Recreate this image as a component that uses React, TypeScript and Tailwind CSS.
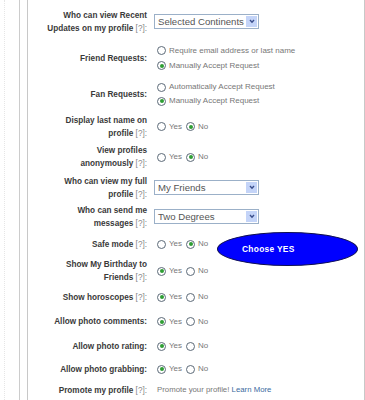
import React from "react";

const Radio = ({ checked }: { checked?: boolean }) => (
  <span className="inline-flex h-[9px] w-[9px] shrink-0 items-center justify-center rounded-full border border-[#5c6a78] bg-white">
    {checked && <span className="h-[4px] w-[4px] rounded-full bg-[#2f9e34]" />}
  </span>
);

const Option = ({ checked, text }: { checked?: boolean; text: string }) => (
  <span className="flex items-center gap-[3px]">
    <Radio checked={checked} />
    <span className="text-[8px] leading-[10px] text-[#777]">{text}</span>
  </span>
);

const YesNo = ({ yes }: { yes?: boolean }) => (
  <div className="ml-[3px] flex items-center gap-[4px]">
    <Option checked={yes} text="Yes" />
    <Option checked={!yes} text="No" />
  </div>
);

const Select = ({ value }: { value: string }) => (
  <div className="flex h-[15px] w-[105px] items-center border border-[#9bb0c8] bg-white">
    <span className="flex-1 pl-[3px] text-[9.6px] leading-[12px] text-[#555]">{value}</span>
    <span className="mr-[1px] flex h-[11px] w-[11px] items-center justify-center bg-[#c4d4f8]">
      <svg width="6" height="5" viewBox="0 0 6 5">
        <path d="M1 1 L3 3.2 L5 1" fill="none" stroke="#3b4f8c" strokeWidth="1.4" />
      </svg>
    </span>
  </div>
);

const Help = () => <span className="font-normal text-[#888]">[?]:</span>;

const Row = ({
  h,
  label,
  children,
  relative,
}: {
  h: string;
  label: React.ReactNode;
  children: React.ReactNode;
  relative?: boolean;
}) => (
  <div className={`flex items-center ${h} ${relative ? "relative" : ""}`}>
    <div className="w-[119px] shrink-0 text-right text-[8.2px] font-bold leading-[13px] text-[#3a3a3a]">
      {label}
    </div>
    <div className="ml-[7px] flex flex-col">{children}</div>
  </div>
);

export default function App() {
  return (
    <div className="flex h-[400px] w-[365px] overflow-hidden bg-white font-['Liberation_Sans',Arial,sans-serif]">
      <div className="ml-[4px] w-[15px] border-l border-dotted border-[#e6e6e6]" />
      <div className="w-[8px] border-l border-[#cccccc]" />
      <div className="flex flex-1 flex-col border-l border-r border-[#c8c8c8] pt-[4px]">
        <Row
          h="h-[36px]"
          label={
            <>
              Who can view Recent
              <br />
              Updates on my profile <Help />
            </>
          }
        >
          <Select value="Selected Continents" />
        </Row>
        <Row h="h-[37px]" label="Friend Requests:">
          <div className="ml-[3px] flex flex-col gap-[5px]">
            <Option text="Require email address or last name" />
            <Option checked text="Manually Accept Request" />
          </div>
        </Row>
        <Row h="h-[35px]" label="Fan Requests:">
          <div className="ml-[3px] flex flex-col gap-[4px]">
            <Option text="Automatically Accept Request" />
            <Option checked text="Manually Accept Request" />
          </div>
        </Row>
        <Row
          h="h-[31px]"
          label={
            <>
              Display last name on
              <br />
              profile <Help />
            </>
          }
        >
          <YesNo />
        </Row>
        <Row
          h="h-[30px]"
          label={
            <>
              View profiles
              <br />
              anonymously <Help />
            </>
          }
        >
          <YesNo />
        </Row>
        <Row
          h="h-[31px]"
          label={
            <>
              Who can view my full
              <br />
              profile <Help />
            </>
          }
        >
          <Select value="My Friends" />
        </Row>
        <Row
          h="h-[28px]"
          label={
            <>
              Who can send me
              <br />
              messages <Help />
            </>
          }
        >
          <Select value="Two Degrees" />
        </Row>
        <Row
          h="h-[27px]"
          relative
          label={
            <>
              Safe mode <Help />
            </>
          }
        >
          <YesNo />
          <div className="absolute left-[189px] top-[1px] flex h-[34px] w-[141px] items-center rounded-[50%] border border-[#101050] bg-[#0000ff] pl-[24px]">
            <span className="text-[8.4px] font-bold tracking-[0.3px] text-white">Choose YES</span>
          </div>
        </Row>
        <Row
          h="h-[27px]"
          label={
            <>
              Show My Birthday to
              <br />
              Friends <Help />
            </>
          }
        >
          <YesNo yes />
        </Row>
        <Row
          h="h-[25px]"
          label={
            <>
              Show horoscopes <Help />
            </>
          }
        >
          <YesNo yes />
        </Row>
        <Row h="h-[25px]" label="Allow photo comments:">
          <YesNo yes />
        </Row>
        <Row h="h-[24px]" label="Allow photo rating:">
          <YesNo yes />
        </Row>
        <Row h="h-[22px]" label="Allow photo grabbing:">
          <YesNo yes />
        </Row>
        <Row
          h="h-[20px]"
          label={
            <>
              Promote my profile <Help />
            </>
          }
        >
          <span className="ml-[3px] text-[7.8px] text-[#777]">
            Promote your profile! <span className="text-[#3b6aa0]">Learn More</span>
          </span>
        </Row>
      </div>
    </div>
  );
}
